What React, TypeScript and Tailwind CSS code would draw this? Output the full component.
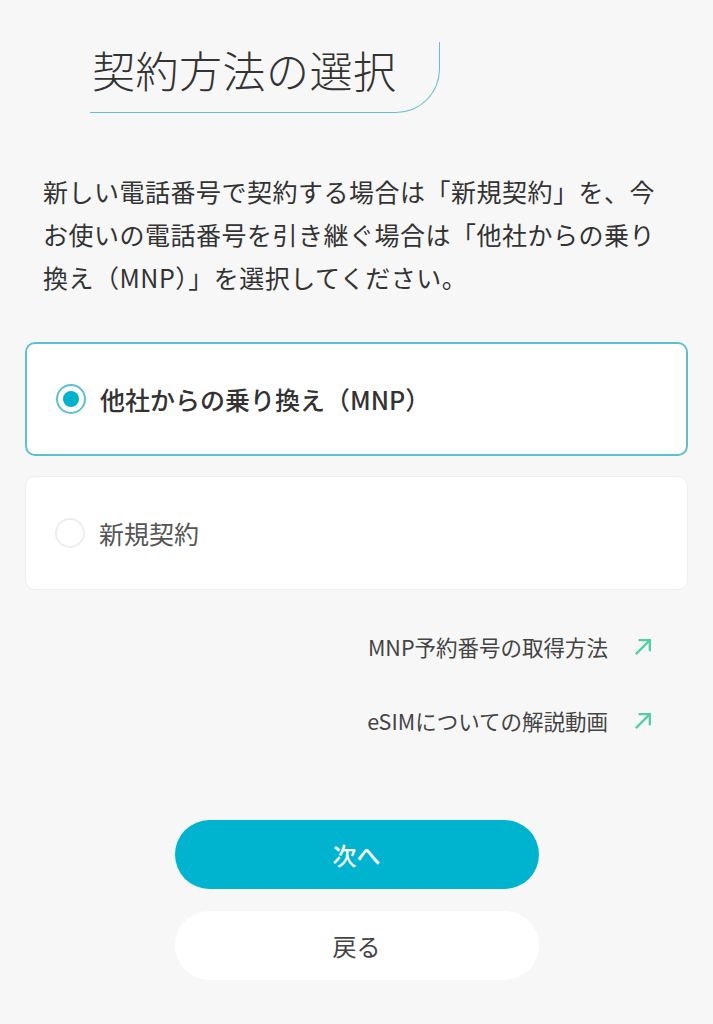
import React, { useState } from 'react';

const font = { fontFamily: '"Noto Sans CJK JP", "Noto Sans", sans-serif' };

const ArrowIcon: React.FC = () => (
    <svg width="19" height="19" viewBox="0 0 18 18" fill="none" className="shrink-0">
        <path d="M2.5 15.5 L15 3 M5.5 3 H15 V12.5" stroke="#52cfa3" strokeWidth="2.2" strokeLinecap="square" />
    </svg>
);

interface OptionProps {
    label: string;
    selected: boolean;
    onSelect: () => void;
}

const Option: React.FC<OptionProps> = ({ label, selected, onSelect }) => (
    <button
        type="button"
        onClick={onSelect}
        className={`flex h-[114px] w-full items-center gap-[14px] rounded-[10px] bg-white pl-[29px] text-left ${
            selected ? 'border-2 border-[#5dc1cd]' : 'border border-[#efefef]'
        }`}
    >
        <span
            className={`flex h-[30px] w-[30px] items-center justify-center rounded-full ${
                selected ? 'border-2 border-[#5dc1cd]' : 'border-2 border-[#eeeeee]'
            }`}
        >
            {selected && <span className="h-[16px] w-[16px] rounded-full bg-[#00b2cd]" />}
        </span>
        <span
            className={`text-[25px] leading-none ${selected ? 'font-medium text-[#333333]' : 'text-[#555555]'}`}
        >
            {label}
        </span>
    </button>
);

export default function App() {
    const [choice, setChoice] = useState<'mnp' | 'new'>('mnp');

    return (
        <div className="min-h-[1024px] bg-[#f7f7f7] pb-[42px]" style={font}>
            <div className="pl-[90px] pr-[273px] pt-[42px]">
                <div className="h-[71px] rounded-br-[44px] border-r-[1.5px] border-b-[1.5px] border-[#5fc3cf]">
                    <h1 className="pt-[6px] pl-[2px] text-[43px] font-light leading-none tracking-[0.5px] text-[#333333]">
                        契約方法の選択
                    </h1>
                </div>
            </div>

            <p className="mt-[57px] px-[43px] text-[25px] leading-[43px] tracking-[0.5px] text-[#333333]">
                新しい電話番号で契約する場合は「新規契約」を、今
                <br />
                お使いの電話番号を引き継ぐ場合は「他社からの乗り
                <br />
                換え（MNP）」を選択してください。
            </p>

            <div className="mt-[43px] flex flex-col gap-[20px] px-[25px]">
                <Option label="他社からの乗り換え（MNP）" selected={choice === 'mnp'} onSelect={() => setChoice('mnp')} />
                <Option label="新規契約" selected={choice === 'new'} onSelect={() => setChoice('new')} />
            </div>

            <div className="mt-[42px] flex flex-col items-end gap-[45px] pr-[60px]">
                <a href="#" className="flex items-center gap-[26px] text-[21.5px] leading-[29px] text-[#444444]">
                    MNP予約番号の取得方法
                    <ArrowIcon />
                </a>
                <a href="#" className="flex items-center gap-[26px] text-[21.5px] leading-[29px] text-[#444444]">
                    eSIMについての解説動画
                    <ArrowIcon />
                </a>
            </div>

            <div className="mt-[85px] flex flex-col items-center gap-[22px]">
                <button
                    type="button"
                    className="h-[69px] w-[364px] rounded-full bg-[#00b4cf] text-[24px] font-medium text-white"
                >
                    次へ
                </button>
                <button
                    type="button"
                    className="h-[69px] w-[364px] rounded-full bg-white text-[24px] text-[#444444]"
                >
                    戻る
                </button>
            </div>
        </div>
    );
}
